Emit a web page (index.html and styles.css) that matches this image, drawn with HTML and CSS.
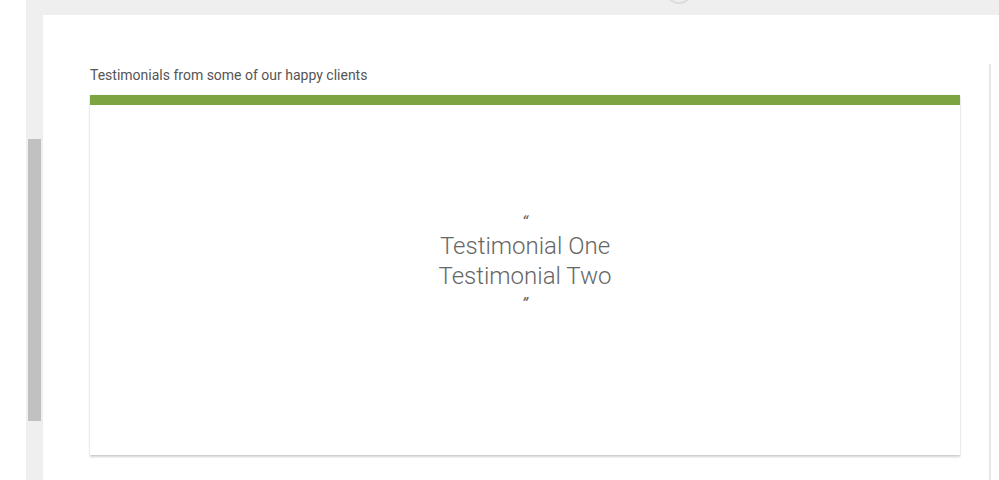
FILE: index.html
```html
<!DOCTYPE html>
<html>
<head>
<meta charset="utf-8">
<link rel="stylesheet" href="styles.css">
</head>
<body>
<div class="page">
  <div class="gutter"></div>
  <div class="rail"><div class="thumb"></div></div>
  <div class="main">
    <div class="topband"><div class="knob"></div></div>
    <div class="panel">
      <div class="content">
        <h2 class="heading">Testimonials from some of our happy clients</h2>
        <div class="card">
          <div class="quote">“</div>
          <div class="line">Testimonial One</div>
          <div class="line">Testimonial Two</div>
          <div class="quote close">”</div>
        </div>
      </div>
      <div class="side"></div>
    </div>
  </div>
</div>
</body>
</html>
```
FILE: styles.css
```css
html, body {
  margin: 0;
  padding: 0;
  background: #fff;
  font-family: Roboto, "Liberation Sans", sans-serif;
}
.page {
  display: flex;
  height: 480px;
  overflow: hidden;
}
.gutter {
  width: 26px;
  flex: none;
  background: #fff;
}
.rail {
  width: 17px;
  flex: none;
  background: #efefef;
  padding-top: 139px;
  box-sizing: border-box;
}
.thumb {
  margin-left: 2px;
  width: 13px;
  height: 282px;
  background: #c1c1c1;
}
.main {
  flex: 1;
  display: flex;
  flex-direction: column;
}
.topband {
  height: 15px;
  flex: none;
  background: #efefef;
  overflow: hidden;
  display: flex;
}
.knob {
  margin-left: 622px;
  margin-top: -24px;
  width: 24px;
  height: 24px;
  border-radius: 50%;
  border: 2px solid #dcdcdc;
  border-top-color: transparent;
}
.panel {
  flex: 1;
  background: #fff;
  display: flex;
}
.content {
  width: 917px;
  padding-left: 47px;
  padding-top: 52px;
  box-sizing: border-box;
}
.heading {
  margin: 0 0 12px;
  font-size: 14px;
  line-height: 16px;
  font-weight: 400;
  color: #555;
}
.card {
  width: 870px;
  height: 360px;
  box-sizing: border-box;
  border-top: 10px solid #7ca440;
  background: #fff;
  box-shadow: 0 2px 2px rgba(0,0,0,0.18), 0 0 1px rgba(0,0,0,0.14);
  padding-top: 109px;
  text-align: center;
  color: #666;
}
.quote {
  font-size: 17px;
  line-height: 17px;
  height: 17px;
  font-style: italic;
  font-weight: 400;
  color: #666;
}
.close {
  padding-top: 4px;
}
.line {
  font-size: 24px;
  font-weight: 300;
  line-height: 30px;
}
.side {
  margin-top: 49px;
  margin-left: 29px;
  width: 2px;
  background: #e6e6e6;
}
```
